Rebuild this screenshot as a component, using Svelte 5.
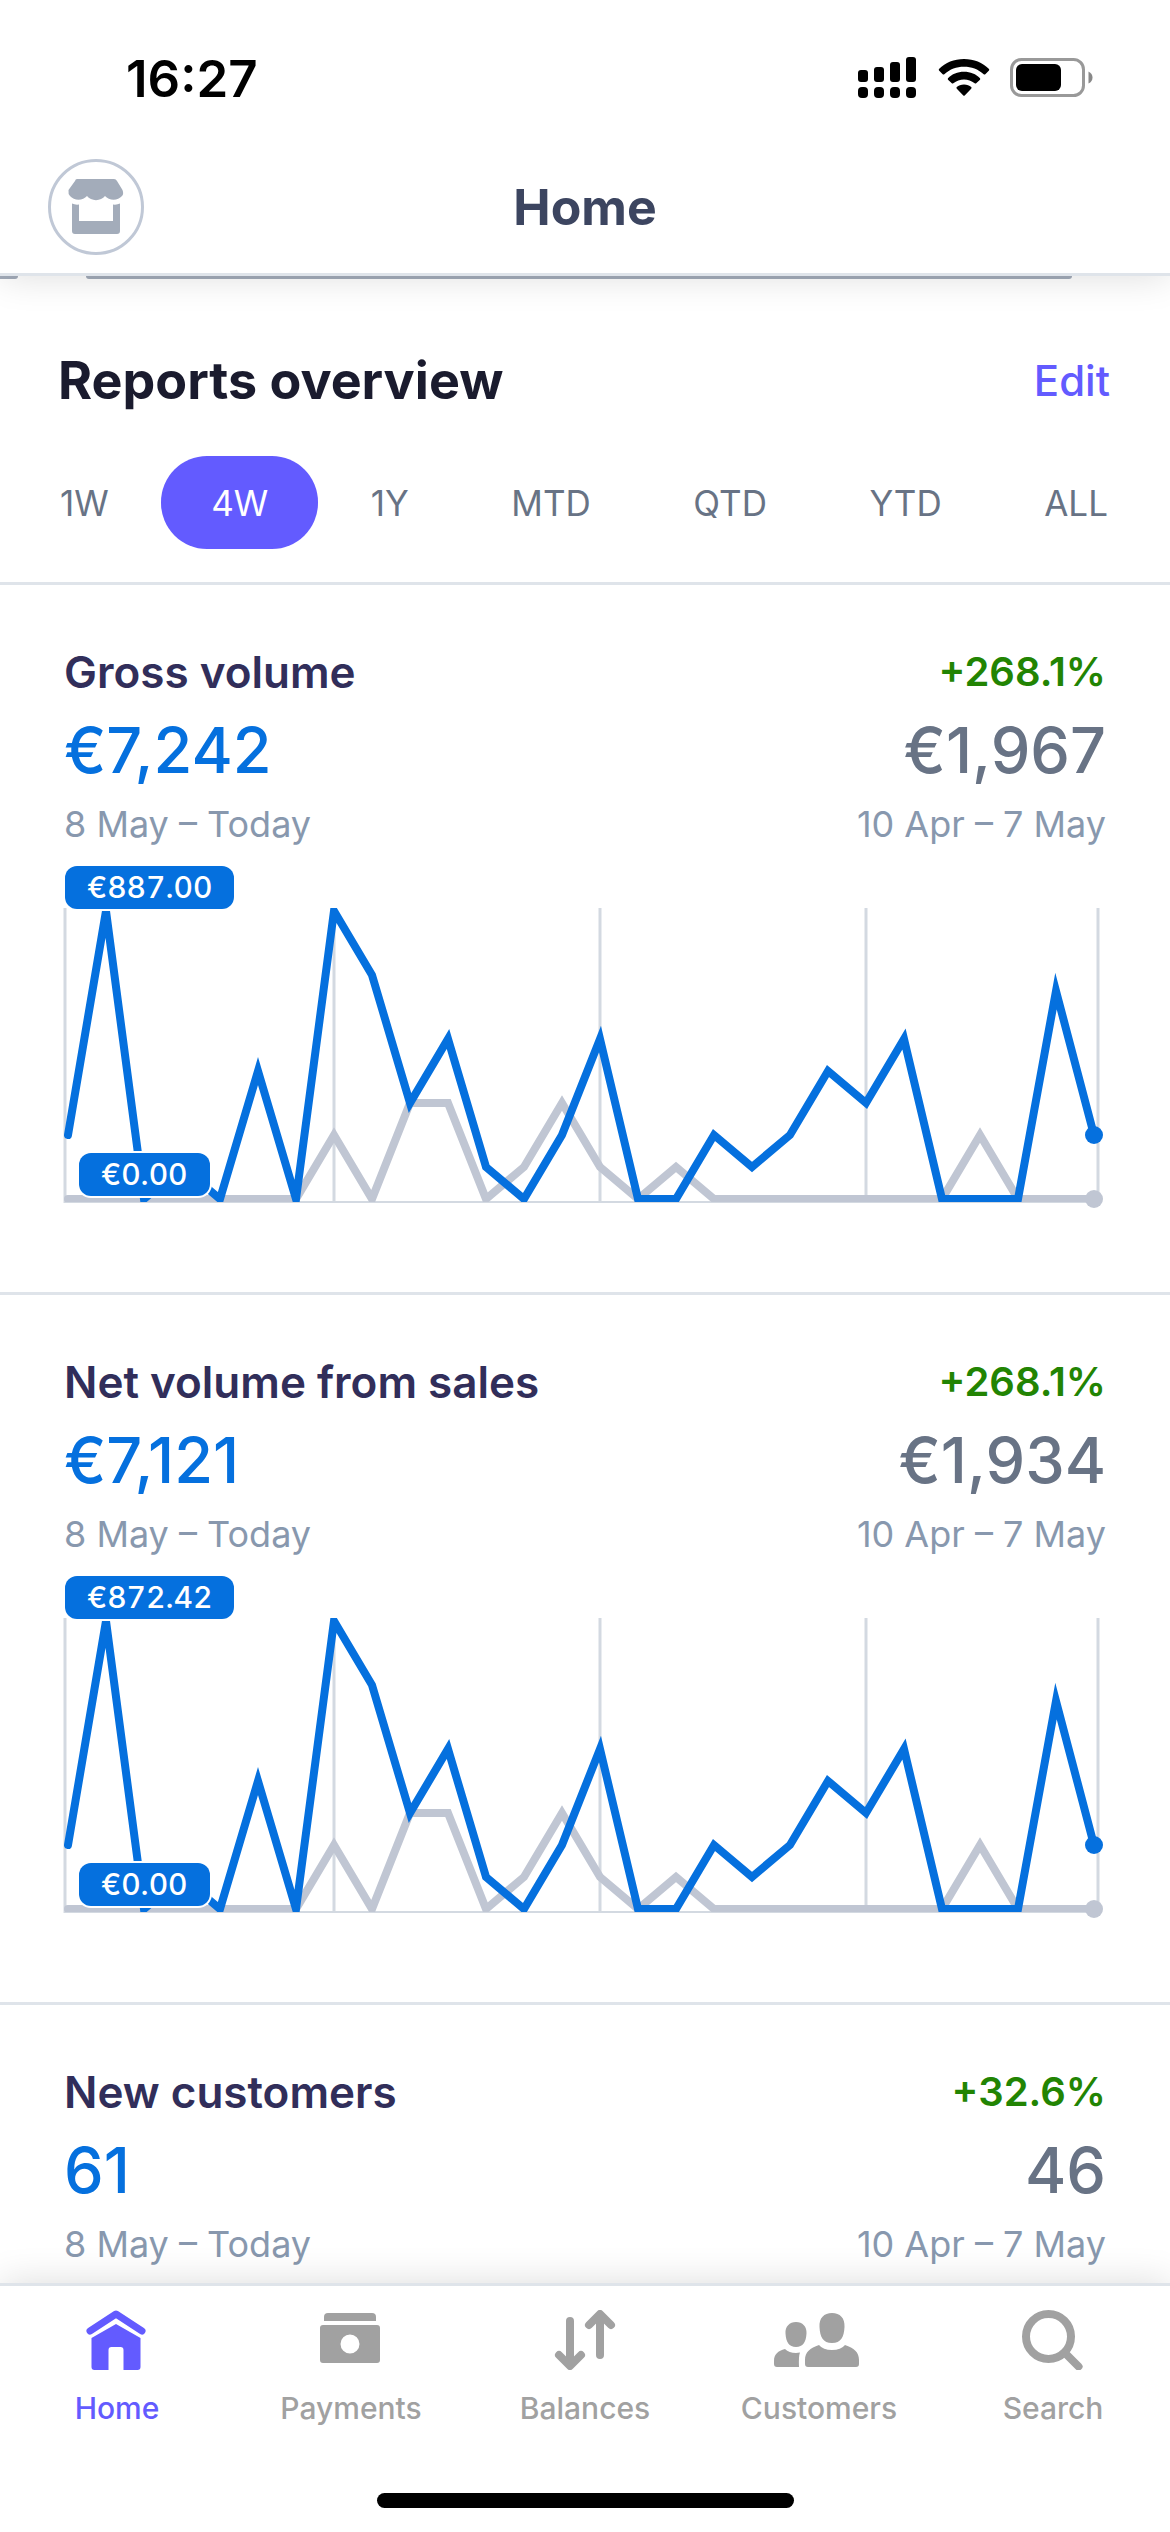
<script lang="ts">
    // Everything in a chart is measured in steps, the tallest day being 9 of them
    const CHART_WIDTH = 1042;
    const CHART_HEIGHT = 296;
    const FIRST_X = 4;
    const STEP_X = 38;
    const ZERO_Y = 291;
    const STEP_Y = 32;

    const current: number[] = [2, 9, 0, 1, 0, 4, 0, 9, 7, 3, 5, 1, 0, 2, 5, 0, 0, 2, 1, 2, 4, 3, 5, 0, 0, 0, 6.5, 2];
    const previous: number[] = [0, 0, 0, 0, 0, 0, 0, 2, 0, 3, 3, 0, 1, 3, 1, 0, 1, 0, 0, 0, 0, 0, 0, 0, 2, 0, 0, 0];
    const gridLines: number[] = [1, 270, 536, 802, 1034];

    const ranges: string[] = ["1W", "4W", "1Y", "MTD", "QTD", "YTD", "ALL"];
    let selectedRange: string = $state("4W");

    const tabs: string[] = ["Home", "Payments", "Balances", "Customers", "Search"];
    let activeTab: string = $state("Home");

    const reports = [
        { title: "Gross volume", change: "+268.1%", value: "€7,242", before: "€1,967", max: "€887.00" },
        { title: "Net volume from sales", change: "+268.1%", value: "€7,121", before: "€1,934", max: "€872.42" },
        { title: "New customers", change: "+32.6%", value: "61", before: "46" },
    ];

    const pointX = (index: number) => FIRST_X + index * STEP_X;
    const pointY = (value: number) => ZERO_Y - value * STEP_Y;

    // Turn a list of values into polyline points
    const toPoints = function(values: number[]) {
        return values.map((value, index) => `${pointX(index)},${pointY(value)}`).join(" ");
    }
</script>

<div class="app">
    <div class="status">
        <span class="time">16:27</span>
        <div class="status-icons">
            <svg width="60" height="50" viewBox="0 -1 60 50" aria-hidden="true">
                <rect x="0" y="16" width="10" height="12" rx="3" />
                <rect x="16" y="13" width="10" height="15" rx="3" />
                <rect x="32" y="8" width="10" height="20" rx="3" />
                <rect x="48" y="3" width="10" height="25" rx="3" />
                <rect x="0" y="33" width="10" height="11" rx="4" />
                <rect x="16" y="33" width="10" height="11" rx="4" />
                <rect x="32" y="33" width="10" height="11" rx="4" />
                <rect x="48" y="33" width="10" height="11" rx="4" />
            </svg>
            <svg width="52" height="40" viewBox="0 -1 52 40" aria-hidden="true">
                <path d="M26 0C36 0 44.500 3.500 51 10Q51.500 10.800 51 11.500L47.300 15.200Q46.500 15.800 45.700 15.200C40 10 33.500 7.700 26 7.700S12 10 6.300 15.200Q5.500 15.800 4.700 15.200L1 11.500Q.5 10.800 1 10C7.500 3.500 16 0 26 0Z" />
                <path d="M26 12.800C32.500 12.800 38 15.200 42 19.200Q42.500 20 42 20.700L38.200 24.300Q37.500 24.900 36.700 24.300C33.500 21.700 30 20.400 26 20.400S18.500 21.700 15.300 24.300Q14.500 24.900 13.800 24.300L10 20.700Q9.500 20 10 19.200C14 15.200 19.500 12.800 26 12.800Z" />
                <path d="M26 25.500C29 25.500 31.500 26.500 33.200 28Q34 28.900 33.200 29.700L26.700 36.500Q26 37.200 25.300 36.500L18.800 29.700Q18 28.900 18.800 28C20.500 26.500 23 25.500 26 25.500Z" />
            </svg>
            <svg width="84" height="40" viewBox="0 0 84 40" aria-hidden="true">
                <rect x="1.500" y="1.500" width="72" height="36" rx="10" fill="none" stroke="#999" stroke-width="3" />
                <rect x="6" y="6" width="45" height="27" rx="6" />
                <path d="M78.500 13.500Q82.500 15.500 82.500 19.500T78.500 25.500Z" fill="#888" />
            </svg>
        </div>
    </div>

    <header>
        <button class="store" aria-label="Account">
            <svg width="60" height="60" viewBox="0 1 60 60" aria-hidden="true">
                <path d="M11 3H48Q50 3 51 5L56.500 14Q58 18 56 20A11 10 0 0 1 39 20A11 10 0 0 1 21 20A11 10 0 0 1 4 20Q2 18 2.500 14L9 5Q9.500 3 11 3Z" />
                <path d="M6 27.500Q9 29 13 28.500V45H47V28.500Q51 29 54 27.500V55Q54 58 51 58H9Q6 58 6 55Z" />
            </svg>
        </button>
        <h1>Home</h1>
    </header>

    <main>
        <!-- Bottom edge of the card row that has scrolled under the header -->
        <div class="peek">
            <div class="peek-card before-card"></div>
            <div class="peek-card"></div>
        </div>

        <section class="overview">
            <div class="row">
                <h2>Reports overview</h2>
                <button class="edit">Edit</button>
            </div>
            <div class="ranges">
                {#each ranges as range}
                    <button
                        class="range"
                        class:selected={range === selectedRange}
                        onclick={() => (selectedRange = range)}>{range}</button>
                {/each}
            </div>
        </section>

        {#each reports as report}
            <section class="report">
                <div class="row">
                    <h3>{report.title}</h3>
                    <span class="change">{report.change}</span>
                </div>
                <div class="row value">
                    <span class="now">{report.value}</span>
                    <span class="before">{report.before}</span>
                </div>
                <div class="row dates">
                    <span>8 May – Today</span>
                    <span>10 Apr – 7 May</span>
                </div>
                {#if report.max}
                    <div class="chart">
                        <svg viewBox="0 0 {CHART_WIDTH} {CHART_HEIGHT}" aria-hidden="true">
                            {#each gridLines as x}
                                <line class="grid" x1={x} y1="0" x2={x} y2="295" />
                            {/each}
                            <line class="axis" x1="0" y1="294" x2="1035" y2="294" />
                            <svg width={CHART_WIDTH} height="294">
                                <polyline class="line previous" points={toPoints(previous)} />
                                <polyline class="line current" points={toPoints(current)} />
                            </svg>
                            <circle class="previous-dot" cx={pointX(27)} cy={pointY(0)} r="9" />
                            <circle class="current-dot" cx={pointX(27)} cy={pointY(2)} r="9" />
                        </svg>
                        <span class="badge max">{report.max}</span>
                        <span class="badge min">€0.00</span>
                    </div>
                {/if}
            </section>
        {/each}
    </main>

    <nav>
        <div class="tabs">
            {#each tabs as tab}
                <button class="tab" class:active={tab === activeTab} onclick={() => (activeTab = tab)}>
                    {#if tab === "Home"}
                        <svg width="90" height="60" viewBox="1 0 90 60" aria-hidden="true">
                            <path d="M19 21L45 4L71 21" fill="none" stroke="currentColor" stroke-width="7" stroke-linecap="round" stroke-linejoin="round" />
                            <path d="M20.500 28L45 14L69.500 28V57Q69.500 60 66.500 60H52.500V40Q52.500 37 49.500 37H40.500Q37.500 37 37.500 40V60H23.500Q20.500 60 20.500 57Z" />
                        </svg>
                    {:else if tab === "Payments"}
                        <svg width="90" height="60" viewBox="1 0 90 60" aria-hidden="true">
                            <path d="M19 11V7Q19 3 23 3H67Q71 3 71 7V11Z" />
                            <path fill-rule="evenodd" d="M18 15H72Q75 15 75 18V50Q75 53 72 53H18Q15 53 15 50V18Q15 15 18 15ZM45 24.500A9.500 9.500 0 1 0 45 43.500A9.500 9.500 0 1 0 45 24.500Z" />
                        </svg>
                    {:else if tab === "Balances"}
                        <svg class="stroked" width="90" height="60" viewBox="0 0 90 60" aria-hidden="true">
                            <path d="M30 11V55M19 45L30 56L41 45" />
                            <path d="M60 45V5M49 15L60 4L71 15" />
                        </svg>
                    {:else if tab === "Customers"}
                        <svg width="90" height="60" viewBox="3 0 90 60" aria-hidden="true">
                            <path d="M61 3C69 3 74 8 73.500 17C73 27 70 33 61 33S49 27 48.500 17C48 8 53 3 61 3Z" />
                            <path d="M25 12C31.500 12 36 16.500 35.500 23.500C35 32 32 37 25 37S15 32 14.500 23.500C14 16.500 18.500 12 25 12Z" />
                            <path d="M48 35Q52 40 61 40T74 35C83 38 88 42 88 50V54Q88 57 85 57H37Q34 57 34 54V50C34 42 39 38 48 35Z" />
                            <path d="M14 39Q18 43 25 43L29 42.500Q27.500 46 28 57H6Q3 57 3 54V51C3 44 7 41 14 39Z" />
                        </svg>
                    {:else}
                        <svg class="stroked" width="90" height="60" viewBox="0 0 90 60" aria-hidden="true">
                            <circle cx="40.500" cy="26.500" r="22.500" />
                            <path d="M57 43L70.500 56.500" />
                        </svg>
                    {/if}
                    <span>{tab}</span>
                </button>
            {/each}
        </div>
        <div class="home-indicator"></div>
    </nav>
</div>

<style>
    :global(body) {
        margin: 0;
        background-color: #fff;
    }

    .app {
        display: flex;
        flex-direction: column;
        height: 100vh;
        overflow: hidden;
        background-color: #fff;
        font-family: Inter, "Liberation Sans", sans-serif;
    }

    button {
        border: none;
        background: none;
        padding: 0;
        font: inherit;
        cursor: pointer;
    }

    h1, h2, h3 {
        margin: 0;
        font-weight: 600;
    }

    .status {
        display: flex;
        justify-content: space-between;
        align-items: center;
        height: 156px;
        padding: 0 76px 0 126px;
    }

    .time {
        font-size: 51px;
        font-weight: 600;
    }

    .status-icons {
        display: flex;
        align-items: center;
        gap: 20px;
    }

    header {
        position: relative;
        z-index: 2;
        display: grid;
        grid-template-columns: 1fr auto 1fr;
        align-items: center;
        height: 102px;
        padding: 0 48px 15px;
        border-bottom: 3px solid #dfe4ea;
        box-shadow: 0 0 36px rgba(0, 0, 0, 0.14);
        clip-path: inset(0 0 -60px 0);
    }

    .store {
        display: grid;
        place-items: center;
        box-sizing: border-box;
        width: 96px;
        height: 96px;
        border: 3px solid #c0c8d6;
        border-radius: 50%;
        fill: #a3acba;
    }

    h1 {
        font-size: 50px;
        font-weight: 700;
        color: #3c4560;
    }

    main {
        flex: 1;
        min-height: 0;
        overflow: hidden;
    }

    .peek {
        display: flex;
        gap: 68px;
        height: 3px;
        padding-right: 98px;
    }

    .peek-card {
        flex: 1;
        background-color: #a3acba;
        border-radius: 0 0 12px 12px;
    }

    .before-card {
        flex: none;
        width: 18px;
        border-radius: 0 0 12px 0;
    }

    .row {
        display: flex;
        justify-content: space-between;
        align-items: center;
    }

    .overview {
        padding: 70px 60px 33px 58px;
        border-bottom: 3px solid #dfe4ea;
    }

    h2 {
        font-size: 52px;
        font-weight: 700;
        line-height: 64px;
        color: #1a1b2e;
    }

    .edit {
        font-size: 42px;
        font-weight: 500;
        line-height: 64px;
        color: #635bff;
    }

    .ranges {
        display: flex;
        justify-content: space-between;
        margin: 43px 2px 0;
    }

    .range {
        height: 93px;
        font-size: 35px;
        color: #687385;
    }

    .range.selected {
        margin: 0 -50px;
        padding: 0 50px;
        border-radius: 46px;
        background-color: #635bff;
        color: #fff;
    }

    .report {
        padding: 59px 64px 88px;
        border-bottom: 3px solid #dfe4ea;
    }

    h3 {
        font-size: 44px;
        line-height: 56px;
        color: #312e5a;
    }

    .change {
        font-size: 40px;
        font-weight: 600;
        line-height: 56px;
        color: #228403;
    }

    .value {
        font-size: 63px;
        font-weight: 500;
        line-height: 80px;
        margin-top: 10px;
    }

    .now {
        color: #0570de;
    }

    .before {
        color: #687385;
    }

    .dates {
        font-size: 36px;
        line-height: 48px;
        margin-top: 10px;
        color: #8898ae;
    }

    .chart {
        position: relative;
        margin-top: 60px;
    }

    .chart > svg {
        display: block;
        width: 100%;
        overflow: visible;
    }

    .line {
        fill: none;
        stroke-width: 8;
        stroke-miterlimit: 12;
        stroke-linecap: round;
    }

    .line.current {
        stroke: #0570de;
    }

    .line.previous {
        stroke: #c0c6d3;
    }

    .current-dot {
        fill: #0570de;
    }

    .previous-dot {
        fill: #c0c6d3;
    }

    .grid {
        stroke: #d3d9e1;
        stroke-width: 3;
    }

    .axis {
        stroke: #d3d9e1;
        stroke-width: 2;
    }

    .badge {
        position: absolute;
        padding: 0 22px;
        border-radius: 12px;
        background-color: #0570de;
        box-shadow: 0 0 0 2px #fff;
        color: #fff;
        font-size: 30px;
        font-weight: 500;
        font-variant-numeric: tabular-nums;
        line-height: 43px;
    }

    .badge.max {
        top: -42px;
        left: 1px;
    }

    .badge.min {
        bottom: 8px;
        left: 15px;
    }

    nav {
        position: relative;
        display: flex;
        flex-direction: column;
        align-items: center;
        padding-bottom: 24px;
        border-top: 3px solid #dfe4ea;
        background-color: #fff;
        box-shadow: 0 0 36px rgba(0, 0, 0, 0.14);
        clip-path: inset(-60px 0 0 0);
    }

    .tabs {
        display: grid;
        grid-template-columns: repeat(5, 1fr);
        width: 100%;
        padding: 24px 0 67px;
    }

    .tab {
        display: flex;
        flex-direction: column;
        align-items: center;
        gap: 20px;
        color: #a1a1a1;
        font-size: 30px;
        font-weight: 500;
        line-height: 36px;
    }

    .tab svg {
        fill: currentColor;
    }

    .tab svg.stroked {
        fill: none;
        stroke: currentColor;
        stroke-width: 8;
        stroke-linecap: round;
        stroke-linejoin: round;
    }

    .tab.active {
        color: #635bff;
    }

    .home-indicator {
        width: 417px;
        height: 15px;
        border-radius: 8px;
        background-color: #000;
    }
</style>
